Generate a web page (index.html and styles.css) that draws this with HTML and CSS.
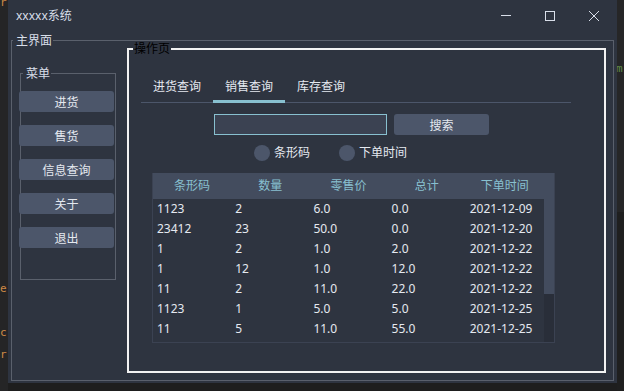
FILE: index.html
```html
<!DOCTYPE html>
<html lang="zh-CN">
<head>
  <meta charset="UTF-8">
  <meta name="viewport" content="width=device-width, initial-scale=1.0">
  <title>xxxxx系统</title>
  <link rel="stylesheet" href="styles.css">
</head>
<body>

  <!-- 编辑器左侧残留 -->
  <div class="gutter">
    <div class="code-line">r</div>
    <div class="code-line"></div><div class="code-line"></div><div class="code-line"></div>
    <div class="code-line"></div><div class="code-line"></div><div class="code-line"></div>
    <div class="code-line"></div><div class="code-line"></div><div class="code-line"></div>
    <div class="code-line"></div><div class="code-line"></div><div class="code-line"></div>
    <div class="code-line">e</div>
    <div class="code-line"></div>
    <div class="code-line">c</div>
    <div class="code-line">r</div>
  </div>

  <div class="window">
    <div class="titlebar">
      <span class="title">xxxxx系统</span>
      <div class="controls">
        <span class="ctl">
          <svg width="10" height="10" viewBox="0 0 10 10"><path d="M0 4.5H10" stroke="#d8dee9" stroke-width="1"/></svg>
        </span>
        <span class="ctl">
          <svg width="10" height="10" viewBox="0 0 10 10"><rect x="0.5" y="0.5" width="9" height="9" fill="none" stroke="#d8dee9" stroke-width="1"/></svg>
        </span>
        <span class="ctl">
          <svg width="10" height="10" viewBox="0 0 10 10"><path d="M0 0L10 10M10 0L0 10" stroke="#d8dee9" stroke-width="1"/></svg>
        </span>
      </div>
    </div>

    <fieldset class="main-group">
      <legend>主界面</legend>
      <div class="main-body">

        <!-- 菜单 -->
        <fieldset class="menu-group">
          <legend>菜单</legend>
          <div class="menu-list">
            <button class="menu-btn">进货</button>
            <button class="menu-btn">售货</button>
            <button class="menu-btn">信息查询</button>
            <button class="menu-btn">关于</button>
            <button class="menu-btn">退出</button>
          </div>
        </fieldset>

        <!-- 操作页 -->
        <fieldset class="op-group">
          <legend>操作页</legend>
          <div class="tabs">
            <div class="tab">进货查询</div>
            <div class="tab active">销售查询</div>
            <div class="tab">库存查询</div>
          </div>

          <div class="pane">
            <div class="search-row">
              <input type="text" class="search-input">
              <button class="search-btn">搜索</button>
            </div>

            <div class="radio-row">
              <label class="radio"><span class="dot"></span>条形码</label>
              <label class="radio"><span class="dot"></span>下单时间</label>
            </div>

            <div class="table">
              <div class="thead">
                <div>条形码</div>
                <div>数量</div>
                <div>零售价</div>
                <div>总计</div>
                <div>下单时间</div>
                <div></div>
              </div>
              <div class="tbody">
                <div class="rows" id="rows"></div>
                <div class="scrollbar"><div class="handle"></div></div>
              </div>
            </div>
          </div>
        </fieldset>

      </div>
    </fieldset>
  </div>

  <div class="right-strip"><span class="code-m">m</span></div>

  <script>
    // 销售记录
    var vendas = [
      ["1123", "2", "6.0", "0.0", "2021-12-09"],
      ["23412", "23", "50.0", "0.0", "2021-12-20"],
      ["1", "2", "1.0", "2.0", "2021-12-22"],
      ["1", "12", "1.0", "12.0", "2021-12-22"],
      ["11", "2", "11.0", "22.0", "2021-12-22"],
      ["1123", "1", "5.0", "5.0", "2021-12-25"],
      ["11", "5", "11.0", "55.0", "2021-12-25"]
    ];

    var container = document.getElementById("rows");
    for (var i = 0; i < vendas.length; i++) {
      var row = document.createElement("div");
      row.className = "row";
      for (var j = 0; j < vendas[i].length; j++) {
        var cell = document.createElement("div");
        cell.textContent = vendas[i][j];
        row.appendChild(cell);
      }
      container.appendChild(row);
    }
  </script>

</body>
</html>
```

FILE: styles.css
```css
/* Geral */
body {
  margin: 0;
  height: 391px;
  overflow: hidden;
  display: flex;
  align-items: flex-start;
  background: #1e1e1e;
  font-family: "Noto Sans", "Noto Sans CJK SC", sans-serif;
  font-size: 12px;
  color: #e5e9f0;
}
fieldset {
  margin: 0;
  padding: 0;
  min-width: 0;
}
legend {
  padding: 0;
}

/* Editor em volta */
.gutter {
  width: 8px;
  align-self: stretch;
  background: #252526;
  overflow: hidden;
  font-family: "DejaVu Sans Mono", monospace;
  font-size: 11px;
  color: #ce8a45;
}
.gutter .code-line {
  height: 22px;
  line-height: 22px;
}
.gutter .code-line:first-child {
  margin-top: -8px;
}
.right-strip {
  flex: 1;
  align-self: stretch;
  background: linear-gradient(#262627 0, #262627 212px, #1f1f1f 212px);
  overflow: hidden;
  font-family: "DejaVu Sans Mono", monospace;
  font-size: 11px;
  color: #5f8c4a;
}
.code-m {
  display: block;
  margin-top: 61px;
  margin-left: -1px;
  line-height: 16px;
}

/* Janela */
.window {
  width: 609px;
  background: #2e3440;
  display: flex;
  flex-direction: column;
}
.titlebar {
  height: 36px;
  display: flex;
  align-items: flex-start;
  justify-content: space-between;
  padding-left: 8px;
}
.title {
  line-height: 32px;
  color: #d8dee9;
}
.controls {
  display: flex;
  margin-right: 1px;
}
.ctl {
  width: 44px;
  height: 32px;
  display: flex;
  align-items: center;
  justify-content: center;
}
.ctl svg {
  display: block;
}

/* Grupo principal */
.main-group {
  margin: 0 3px 2px 3px;
  border: 1px solid #5a606c;
}
.main-group > legend {
  margin-left: 1px;
  padding: 0 1px 0 3px;
  line-height: 9px;
  color: #d8dee9;
}
.main-body {
  display: flex;
  align-items: flex-start;
  gap: 11px;
  padding: 0 7px 7px 8px;
}

/* Menu */
.menu-group {
  width: 96px;
  box-sizing: border-box;
  margin-top: 24px;
  border: 1px solid #5a606c;
}
.menu-group > legend {
  margin-left: 2px;
  padding: 0 1px 0 3px;
  line-height: 9px;
  color: #d8dee9;
}
.menu-list {
  display: flex;
  flex-direction: column;
  gap: 13px;
  padding: 13px 0 31px 0;
}
.menu-btn {
  width: 95px;
  height: 21px;
  margin-left: -2px;
  padding: 0;
  border: none;
  border-radius: 3px;
  background: #4c566a;
  color: #e5e9f0;
  font-family: inherit;
  font-size: 12px;
}

/* Pagina de operacao */
.op-group {
  flex: 1;
  border: 2px solid #f2f2f2;
  padding: 19px 0 28px 12px;
}
.op-group > legend {
  margin-left: -8px;
  padding: 0 1px;
  line-height: 8px;
  color: #000;
}
.tabs {
  width: 430px;
  height: 30px;
  display: flex;
  border-bottom: 1px solid #4c566a;
}
.tab {
  width: 72px;
  height: 31px;
  box-sizing: border-box;
  margin-bottom: -1px;
  padding-top: 2px;
  line-height: 26px;
  text-align: center;
  border-bottom: 3px solid transparent;
  color: #e5e9f0;
}
.tab.active {
  border-bottom-color: #88c0d0;
}

.pane {
  margin-top: 11px;
}
.search-row {
  display: flex;
  gap: 7px;
  padding-left: 73px;
}
.search-input {
  width: 173px;
  height: 21px;
  box-sizing: border-box;
  margin: 0;
  padding: 0 4px;
  border: 1px solid #88c0d0;
  background: #3b4252;
  color: #e5e9f0;
  outline: none;
}
.search-btn {
  width: 95px;
  height: 21px;
  padding: 0;
  border: none;
  border-radius: 3px;
  background: #4c566a;
  color: #e5e9f0;
  font-family: inherit;
  font-size: 12px;
}
.radio-row {
  display: flex;
  gap: 29px;
  margin-top: 10px;
  padding-left: 113px;
}
.radio {
  display: flex;
  align-items: center;
  gap: 4px;
  line-height: 16px;
  color: #e5e9f0;
}
.dot {
  width: 16px;
  height: 16px;
  border-radius: 50%;
  background: #4c566a;
}

/* Tabela */
.table {
  width: 403px;
  box-sizing: border-box;
  margin: 12px 0 0 11px;
  border: 1px solid #3b4252;
  border-top: none;
}
.thead {
  height: 26px;
  display: grid;
  grid-template-columns: repeat(5, 78.2px) 1fr;
  background: #434c5e;
  color: #88c0d0;
  line-height: 26px;
  text-align: center;
}
.tbody {
  height: 143px;
  display: flex;
}
.rows {
  width: 391px;
  overflow: hidden;
}
.row {
  height: 20px;
  line-height: 20px;
  display: grid;
  grid-template-columns: repeat(5, 78.2px);
}
.row div {
  padding-left: 4px;
}
.scrollbar {
  flex: 1;
  background: #292e39;
}
.handle {
  height: 95px;
  background: #434c5e;
}
```
